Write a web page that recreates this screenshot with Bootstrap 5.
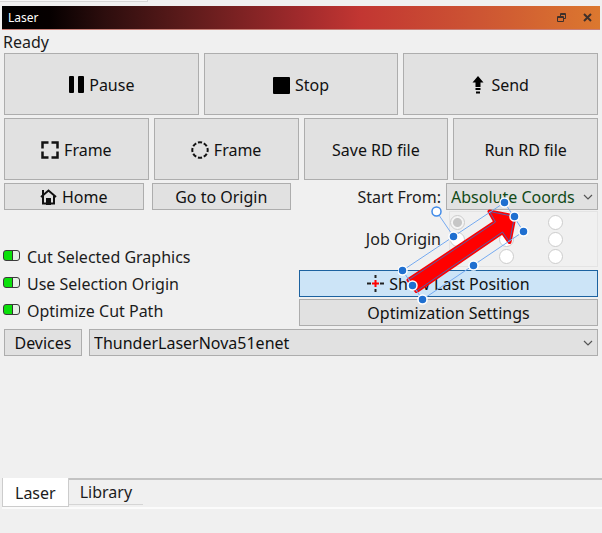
<!DOCTYPE html>
<html lang="en">
<head>
<meta charset="utf-8">
<meta name="viewport" content="width=device-width, initial-scale=1">
<title>Laser</title>
<link href="https://cdn.jsdelivr.net/npm/bootstrap@5.3.0/dist/css/bootstrap.min.css" rel="stylesheet">
<style>
body{background:#f0f0f0;color:#1c1c1c;font-family:"Noto Sans",sans-serif;font-size:16px;line-height:20px}
.prev-panel{width:148px;height:2px;background:#f6f6f6;border-bottom:1px solid #d6d6d6;border-right:1px solid #d6d6d6}
.dock{padding:0 2px;min-height:474px}
.dock-title{height:24px;margin-top:4px;padding:0 8px 0 6px;background:linear-gradient(90deg,#000 0,#060000 8%,#2c0d0d 17%,#5a1a1a 30%,#a12a2c 50%,#c23632 60%,#cd5533 80%,#dc782f 100%);border-bottom:1px solid #c98078;color:#fff;font-size:12px}
.dock-title button{padding:0;border:0;background:none;line-height:0;color:#40302a}
.status{height:23px;padding:2px 1px;line-height:20px}
.controls{padding:0 2px}
.tool{border:1px solid #adadad;border-radius:0;background:#e1e1e1;color:#111;font-size:16px;line-height:20px;padding:2px;height:27px;display:flex;align-items:center;justify-content:center;gap:5px;white-space:nowrap}
.tool:hover{background:#d8e6f1;border-color:#005499}
.tall{height:62px;flex:1 1 0;padding-top:4px}
.row-gap{gap:5px}
.second-row{margin-top:3px}
.tool.shown{background:#cce4f7;border-color:#1c62a0;margin:3px 0 2px}
.pick{appearance:none;border:1px solid #adadad;border-radius:0;height:27px;padding:0 20px 0 4px;color:#111;font-size:16px;line-height:20px;background:#e1e1e1 url("data:image/svg+xml,%3Csvg xmlns='http://www.w3.org/2000/svg' width='10' height='6'%3E%3Cpath d='M1 1l4 4 4-4' fill='none' stroke='%23555' stroke-width='1.2'/%3E%3C/svg%3E") no-repeat right 4px center}
.pick.start{width:152px;color:#124a17}
.lower{display:grid;grid-template-columns:287fr 299fr;column-gap:8px;margin-top:3px}
.origins{display:grid;grid-template-columns:repeat(3,15px);grid-auto-rows:15px;column-gap:34px;row-gap:2px;width:149px;height:56px;padding:3px 0 0 0;border:1px solid #e4e4e4;margin-top:1px}
.origins input{appearance:none;width:15px;height:15px;margin:0;border:1px solid #ccc;border-radius:50%;background:#fff}
.origins input:checked{background:radial-gradient(#c6c6c6 0 4px,#f4f4f4 5px)}
.switches{margin:33px 0 0 -1px}
.switch-line{display:flex;align-items:center;gap:7px;height:27px}
.toggle{appearance:none;width:17px;height:11px;margin:0 0 2px;border:1px solid #3b3b3b;border-radius:3px;background:linear-gradient(90deg,#0be00b 0 8px,#333 8px 9px,#e6f0e6 9px)}
.toggle:not(:checked){background:#ddd}
.device-row{gap:7px;margin-top:3px}
.device-button{width:78px}
.arrow-mark{position:absolute;right:60px;top:12px;pointer-events:none}
.tab-strip{border-top:2px solid #c3c3c3;border-bottom:2px solid #fbfbfb;margin:-2px 0 0 2px;height:31px}
.tab-strip .nav-link{padding:2px 11px;border:0;border-radius:0;color:#1c1c1c;line-height:20px}
.tab-strip .nav-link.active{background:#fff;height:29px;margin-top:-2px;padding:5px 12px;border-left:1px solid #ccc;border-right:1px solid #ccc;border-bottom:1px solid #ccc}
.tab-strip .second{height:25px;border-bottom:1px solid #d5d5d5}
</style>
<script src="https://cdn.jsdelivr.net/npm/bootstrap@5.3.0/dist/js/bootstrap.bundle.min.js"></script>
</head>
<body>
<div class="prev-panel"></div>
<main class="dock">
  <header class="dock-title d-flex align-items-center">
    <span class="flex-grow-1">Laser</span>
    <button type="button" aria-label="Float panel"><svg width="10" height="10" fill="none" stroke="currentColor"><path d="M3.500 3V.5h5v5H7M.5 3.500h6v5h-6zM.5 4.500h6M3.500 1.500h5"/></svg></button>
    <button type="button" class="ms-3" aria-label="Close panel"><svg width="9" height="9" stroke="currentColor" stroke-width="2"><path d="M1 1l7 7M8 1L1 8"/></svg></button>
  </header>
  <div class="status">Ready</div>
  <div class="controls">
    <div class="d-flex row-gap">
      <button type="button" class="tool tall"><svg width="16" height="18"><rect x="1" width="5" height="17" rx="1"/><rect x="10" width="6" height="17" rx="1"/></svg>Pause</button>
      <button type="button" class="tool tall"><svg width="17" height="17"><rect width="17" height="17" rx="1"/></svg>Stop</button>
      <button type="button" class="tool tall"><svg width="14" height="18"><path d="M6 0l5.500 6.500H8.500V11h-5V6.500H.5zM3.500 12h5v2h-5zM4 15.500h4v2H4z"/></svg>Send</button>
    </div>
    <div class="d-flex row-gap second-row">
      <button type="button" class="tool tall"><svg width="18" height="18" fill="none" stroke="#111" stroke-width="2.500"><path d="M1.500 7.500v-6h6M10.500 1.500h6v6M16.500 10.500v6h-6M7.500 16.500h-6v-6"/></svg>Frame</button>
      <button type="button" class="tool tall"><svg width="18" height="18" fill="none" stroke="#111" stroke-width="2"><circle cx="9" cy="9" r="7.700" pathLength="80" stroke-dasharray="7 3" stroke-dashoffset="3.500"/></svg>Frame</button>
      <button type="button" class="tool tall">Save RD file</button>
      <button type="button" class="tool tall">Run RD file</button>
    </div>
    <div class="lower">
      <div>
        <div class="d-flex gap-2">
          <button type="button" class="tool flex-fill w-50"><svg width="17" height="16" fill="none" stroke="#111" stroke-width="2"><path d="M1 8l7.500-6.500L16 8M3 7v7.500h11V7M3 6V1"/><path d="M7 15v-5h3v5z" fill="#111"/></svg>Home</button>
          <button type="button" class="tool flex-fill w-50">Go to Origin</button>
        </div>
        <div class="switches">
          <div class="switch-line"><input class="toggle" type="checkbox" id="cut" checked><label for="cut">Cut Selected Graphics</label></div>
          <div class="switch-line"><input class="toggle" type="checkbox" id="use" checked><label for="use">Use Selection Origin</label></div>
          <div class="switch-line"><input class="toggle" type="checkbox" id="opt" checked><label for="opt">Optimize Cut Path</label></div>
        </div>
      </div>
      <div class="position-relative">
        <div class="d-flex align-items-center justify-content-end row-gap">
          <label for="start">Start From:</label>
          <select class="pick start" id="start"><option>Absolute Coords</option></select>
        </div>
        <div class="d-flex align-items-center justify-content-end gap-2">
          <span id="job">Job Origin</span>
          <div class="origins" role="radiogroup" aria-labelledby="job">
            <input type="radio" name="o" aria-label="Top left" checked><input type="radio" name="o" aria-label="Top"><input type="radio" name="o" aria-label="Top right">
            <input type="radio" name="o" aria-label="Left"><input type="radio" name="o" aria-label="Center"><input type="radio" name="o" aria-label="Right">
            <input type="radio" name="o" aria-label="Bottom left"><input type="radio" name="o" aria-label="Bottom"><input type="radio" name="o" aria-label="Bottom right">
          </div>
        </div>
        <button type="button" class="tool shown w-100"><svg width="17" height="17" stroke-width="2"><path d="M8.500 0v3M8.500 14v3M0 8.500h4M13 8.500h4" stroke="#222"/><path d="M8.500 5v7M5 8.500h7" stroke="#f00"/></svg>Show Last Position</button>
        <button type="button" class="tool w-100">Optimization Settings</button>
        <svg class="arrow-mark" width="140" height="115" viewBox="398 195 140 115" aria-hidden="true">
          <path d="M408.500 280L495.500 222L489.500 211.500L514.500 216.500L509.500 242L502.500 232L416.500 291Z" fill="#f00" stroke="#f00" stroke-width="4" stroke-linejoin="round"/>
          <path d="M408.500 280L495.500 222L489.500 211.500L514.500 216.500L509.500 242L502.500 232L416.500 291Z" fill="none" stroke="#5560a8"/>
          <path d="M402.500 270.500L504.500 202.500L523.500 231.500L422.500 299.500ZM453.500 236.500L436.500 211.500" fill="none" stroke="#75aaf0"/>
          <g fill="#1f6fd0" stroke="#fff" stroke-width="1.500">
            <circle cx="402.500" cy="270.500" r="4.500"/><circle cx="412.500" cy="285.500" r="4.500"/><circle cx="422.500" cy="299.500" r="4.500"/>
            <circle cx="453.500" cy="236.500" r="4.500"/><circle cx="504.500" cy="202.500" r="4.500"/><circle cx="514.500" cy="216.500" r="4.500"/>
            <circle cx="523.500" cy="231.500" r="4.500"/><circle cx="473.500" cy="265.500" r="4.500"/>
          </g>
          <circle cx="436.500" cy="211.500" r="4.500" fill="#fff" stroke="#3f8ae8" stroke-width="1.500"/>
        </svg>
      </div>
    </div>
    <div class="d-flex device-row">
      <button type="button" class="tool device-button">Devices</button>
      <select class="pick flex-fill" aria-label="Device"><option>ThunderLaserNova51enet</option></select>
    </div>
  </div>
</main>
<nav class="tab-strip nav">
  <a class="nav-link active" href="#laser">Laser</a><a class="nav-link second" href="#library">Library</a>
</nav>
</body>
</html>
